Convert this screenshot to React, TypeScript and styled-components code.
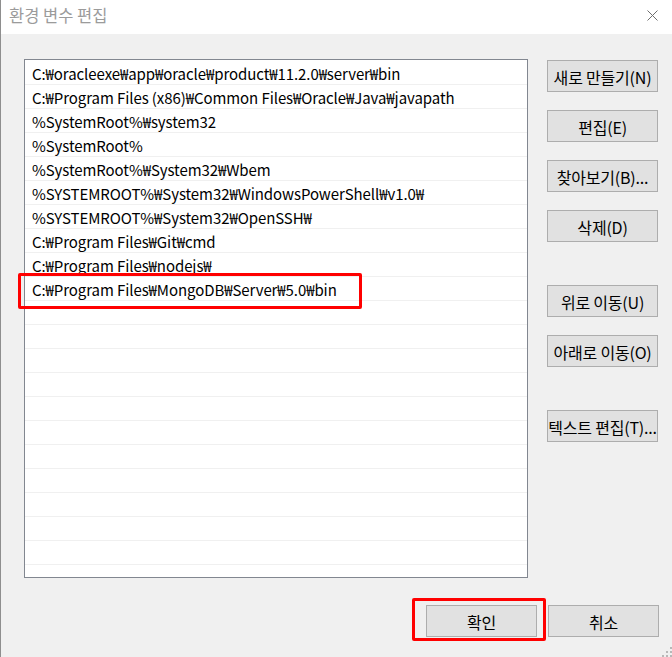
import React from "react";
import styled, { createGlobalStyle } from "styled-components";

const GlobalStyle = createGlobalStyle`
  html, body {
    margin: 0;
    padding: 0;
    width: 672px;
    height: 657px;
    overflow: hidden;
    background: #f0f0f0;
  }
  * { box-sizing: border-box; }
`;

const FONT = `"Noto Sans CJK KR", "Noto Sans", sans-serif`;

const Window = styled.div`
  position: relative;
  width: 672px;
  height: 657px;
  display: flex;
  flex-direction: column;
  border-left: 1px solid #8e8e8e;
  font-family: ${FONT};
  font-size: 15px;
  color: #000;
`;

const TitleBar = styled.div`
  height: 34px;
  flex: none;
  background: #ffffff;
  display: flex;
  align-items: center;
  justify-content: space-between;
  padding: 0 14px 0 8px;
`;

const Title = styled.div`
  color: #9b9b9b;
  font-size: 16.5px;
  line-height: 1;
  padding-bottom: 3px;
`;

const CloseIcon = styled.svg`
  width: 11px;
  height: 11px;
  display: block;
  margin-bottom: 3px;
`;

const Body = styled.div`
  flex: 1;
  background: #f0f0f0;
  display: flex;
  flex-direction: column;
  padding: 25px 13px 0 23px;
`;

const Main = styled.div`
  display: flex;
  gap: 19px;
`;

const List = styled.div`
  width: 504px;
  height: 519px;
  flex: none;
  background: #ffffff;
  border: 1px solid #828790;
  padding-top: 1px;
  display: flex;
  flex-direction: column;
`;

const Row = styled.div`
  position: relative;
  height: 24px;
  flex: none;
  border-bottom: 1px solid #f0f0f0;
  padding-left: 7px;
  display: flex;
  align-items: center;
  white-space: nowrap;
  font-size: 15px;
  letter-spacing: -0.08px;
  line-height: 1;
  padding-top: 1px;
`;

const Highlight = styled.div<{ $l: number; $t: number; $w: number; $h: number }>`
  position: absolute;
  left: ${(p) => p.$l}px;
  top: ${(p) => p.$t}px;
  width: ${(p) => p.$w}px;
  height: ${(p) => p.$h}px;
  border: 3px solid #ff0000;
  border-radius: 2px;
  pointer-events: none;
`;

const ButtonColumn = styled.div`
  display: flex;
  flex-direction: column;
  gap: 18px;
  padding-top: 1px;
`;

const Button = styled.div<{ $gapBefore?: number }>`
  position: relative;
  width: 111px;
  height: 32px;
  flex: none;
  margin-top: ${(p) => p.$gapBefore ?? 0}px;
  background: #e1e1e1;
  border: 1px solid #adadad;
  display: flex;
  align-items: center;
  justify-content: center;
  white-space: nowrap;
  font-size: 16px;
  letter-spacing: -0.2px;
  line-height: 1;
  padding-top: 1px;
`;

const Footer = styled.div`
  display: flex;
  justify-content: flex-end;
  gap: 11px;
  margin-top: 27px;
`;

const Grip = styled.svg`
  position: absolute;
  right: 0;
  bottom: 0;
  width: 12px;
  height: 12px;
`;

const paths = [
  "C:₩oracleexe₩app₩oracle₩product₩11.2.0₩server₩bin",
  "C:₩Program Files (x86)₩Common Files₩Oracle₩Java₩javapath",
  "%SystemRoot%₩system32",
  "%SystemRoot%",
  "%SystemRoot%₩System32₩Wbem",
  "%SYSTEMROOT%₩System32₩WindowsPowerShell₩v1.0₩",
  "%SYSTEMROOT%₩System32₩OpenSSH₩",
  "C:₩Program Files₩Git₩cmd",
  "C:₩Program Files₩nodejs₩",
  "C:₩Program Files₩MongoDB₩Server₩5.0₩bin",
];

const rows = [...paths, ...Array(11).fill("")];

const sideButtons: { label: string; gap?: number }[] = [
  { label: "새로 만들기(N)" },
  { label: "편집(E)" },
  { label: "찾아보기(B)..." },
  { label: "삭제(D)" },
  { label: "위로 이동(U)", gap: 25 },
  { label: "아래로 이동(O)" },
  { label: "텍스트 편집(T)...", gap: 25 },
];

export default function App() {
  return (
    <>
      <GlobalStyle />
      <Window>
        <TitleBar>
          <Title>환경 변수 편집</Title>
          <CloseIcon viewBox="0 0 11 11">
            <path d="M0.5 0.5 L10.5 10.5 M10.5 0.5 L0.5 10.5" stroke="#6e6e6e" strokeWidth="1" fill="none" />
          </CloseIcon>
        </TitleBar>
        <Body>
          <Main>
            <List>
              {rows.map((r, i) => (
                <Row key={i}>
                  {r}
                  {i === 9 && <Highlight $l={-7} $t={-4} $w={344} $h={36} />}
                </Row>
              ))}
            </List>
            <ButtonColumn>
              {sideButtons.map((b) => (
                <Button key={b.label} $gapBefore={b.gap}>
                  {b.label}
                </Button>
              ))}
            </ButtonColumn>
          </Main>
          <Footer>
            <Button>
              확인
              <Highlight $l={-15} $t={-8} $w={134} $h={43} />
            </Button>
            <Button>취소</Button>
          </Footer>
        </Body>
        <Grip viewBox="0 0 12 12">
          {[
            [10, 2], [10, 6], [6, 6], [10, 10], [6, 10], [2, 10],
          ].map(([x, y], i) => (
            <rect key={i} x={x} y={y} width="2" height="2" fill="#b8b8b8" />
          ))}
        </Grip>
      </Window>
    </>
  );
}
